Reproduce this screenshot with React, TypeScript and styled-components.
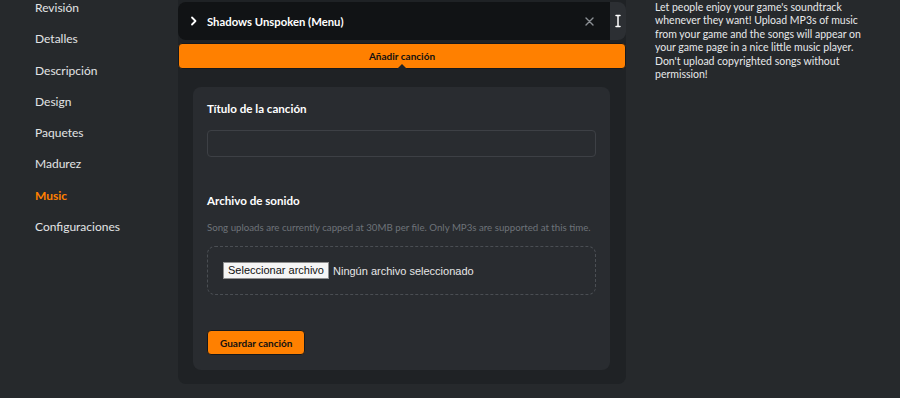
import styled, { createGlobalStyle } from 'styled-components'

const GlobalStyle = createGlobalStyle`
  html, body {
    margin: 0;
    padding: 0;
    background: #26292c;
    font-family: Lato, "Noto Sans", sans-serif;
    color: #e2e4e6;
  }
`

const menu = ['Revisión', 'Detalles', 'Descripción', 'Design', 'Paquetes', 'Madurez', 'Music', 'Configuraciones']

function App() {
  return (
    <>
      <GlobalStyle />
      <Page>
        <Sidebar>
          {menu.map((item) => (
            <NavItem key={item} $active={item === 'Music'}>{item}</NavItem>
          ))}
        </Sidebar>
        <Main>
          <SongRow>
            <SongHead>
              <svg width="8" height="10" viewBox="0 0 8 10">
                <path d="M2 1.5 L5.5 5 L2 8.5" stroke="#fff" strokeWidth="1.8" fill="none" strokeLinecap="round" strokeLinejoin="round" />
              </svg>
              <SongName>Shadows Unspoken (Menu)</SongName>
              <CloseBtn>
                <svg width="9" height="9" viewBox="0 0 9 9">
                  <path d="M1 1 L8 8 M8 1 L1 8" stroke="#8b8f94" strokeWidth="1.4" strokeLinecap="round" />
                </svg>
              </CloseBtn>
            </SongHead>
            <Handle>
              <svg width="6" height="14" viewBox="0 0 6 14">
                <path d="M3 1.5 V12.5 M1 1.5 H5 M1 12.5 H5" stroke="#fff" strokeWidth="1.5" fill="none" strokeLinecap="round" />
              </svg>
            </Handle>
          </SongRow>
          <AddButton>Añadir canción</AddButton>
          <Card>
            <Label>Título de la canción</Label>
            <TextInput />
            <Label $top={36}>Archivo de sonido</Label>
            <Help>Song uploads are currently capped at 30MB per file. Only MP3s are supported at this time.</Help>
            <DropZone>
              <FileButton>Seleccionar archivo</FileButton>
              <FileName>Ningún archivo seleccionado</FileName>
            </DropZone>
            <SaveButton>Guardar canción</SaveButton>
          </Card>
        </Main>
        <Aside>
          Let people enjoy your game's soundtrack whenever they want! Upload MP3s of music from your game and the songs will appear on your game page in a nice little music player. Don't upload copyrighted songs without permission!
        </Aside>
      </Page>
    </>
  )
}

const Page = styled.div`
  display: grid;
  grid-template-columns: 178px 448px 1fr;
  height: 398px;
  overflow: hidden;
`
const Sidebar = styled.nav`
  display: flex;
  flex-direction: column;
  padding-left: 35px;
`
const NavItem = styled.div<{ $active?: boolean }>`
  font-size: 12px;
  line-height: 16px;
  height: 31.3px;
  flex-shrink: 0;
  font-weight: ${(p) => (p.$active ? 700 : 400)};
  color: ${(p) => (p.$active ? '#ff8000' : '#e2e4e6')};
`
const Main = styled.main`
  display: flex;
  flex-direction: column;
  background: #1f2225;
  border-radius: 0 0 8px 8px;
  padding-top: 2px;
  padding-bottom: 14px;
  align-self: start;
`
const SongRow = styled.div`
  display: flex;
  height: 38px;
`
const SongHead = styled.div`
  flex: 1;
  display: flex;
  align-items: center;
  background: #111315;
  border-radius: 8px 0 0 8px;
  padding: 0 16px 0 12px;
  gap: 9px;
`
const SongName = styled.div`
  flex: 1;
  font-size: 11.3px;
  font-weight: 700;
  color: #fff;
`
const CloseBtn = styled.div`
  display: flex;
  align-items: center;
`
const Handle = styled.div`
  width: 16px;
  background: #2c2f33;
  border-radius: 0 8px 8px 0;
  display: flex;
  align-items: center;
  justify-content: center;
`
const AddButton = styled.div`
  position: relative;
  margin-top: 3px;
  height: 26px;
  background: #ff8000;
  border: 1px solid #16181b;
  border-radius: 4px;
  box-sizing: border-box;
  display: flex;
  align-items: center;
  justify-content: center;
  font-size: 10px;
  font-weight: 700;
  color: #111;
  &::after {
    content: '';
    position: absolute;
    left: 50%;
    bottom: -1px;
    margin-left: -5px;
    border-left: 5px solid transparent;
    border-right: 5px solid transparent;
    border-bottom: 5px solid #1f2225;
  }
`
const Card = styled.section`
  margin: 18px 16px 0 15px;
  background: #292c30;
  border-radius: 8px;
  padding: 14px 14px 15px;
  display: flex;
  flex-direction: column;
  align-items: flex-start;
`
const Label = styled.div<{ $top?: number }>`
  font-size: 11.6px;
  font-weight: 700;
  color: #fff;
  line-height: 16px;
  margin-top: ${(p) => p.$top ?? 0}px;
`
const TextInput = styled.input`
  margin-top: 13px;
  width: 100%;
  height: 27px;
  box-sizing: border-box;
  background: transparent;
  border: 1px solid #3d4045;
  border-radius: 4px;
  outline: none;
`
const Help = styled.div`
  margin-top: 11px;
  font-size: 9.7px;
  line-height: 14px;
  white-space: nowrap;
  color: #6e7379;
`
const DropZone = styled.div`
  margin-top: 12px;
  width: 100%;
  height: 49px;
  box-sizing: border-box;
  border: 1px dashed #4a4e53;
  border-radius: 8px;
  display: flex;
  align-items: center;
  padding-left: 15px;
  gap: 4px;
`
const FileButton = styled.button`
  font-family: "Liberation Sans", Arial, sans-serif;
  font-size: 11px;
  height: 17px;
  padding: 0 4px;
  background: #f5f5f5;
  color: #111;
  border: 1px solid #8f8f8f;
  border-radius: 0;
  line-height: 1;
`
const FileName = styled.span`
  font-family: "Liberation Sans", Arial, sans-serif;
  font-size: 11px;
  color: #e6e6e6;
`
const SaveButton = styled.button`
  margin-top: 35px;
  height: 25px;
  padding: 0 12px;
  background: #ff8000;
  border: 1px solid #16181b;
  border-radius: 4px;
  font-family: Lato, "Noto Sans", sans-serif;
  font-size: 10px;
  font-weight: 700;
  color: #111;
`
const Aside = styled.aside`
  margin-left: 29px;
  width: 210px;
  font-size: 10.5px;
  line-height: 13.4px;
  color: #e6e8ea;
  padding-top: 1px;
`

export default App
